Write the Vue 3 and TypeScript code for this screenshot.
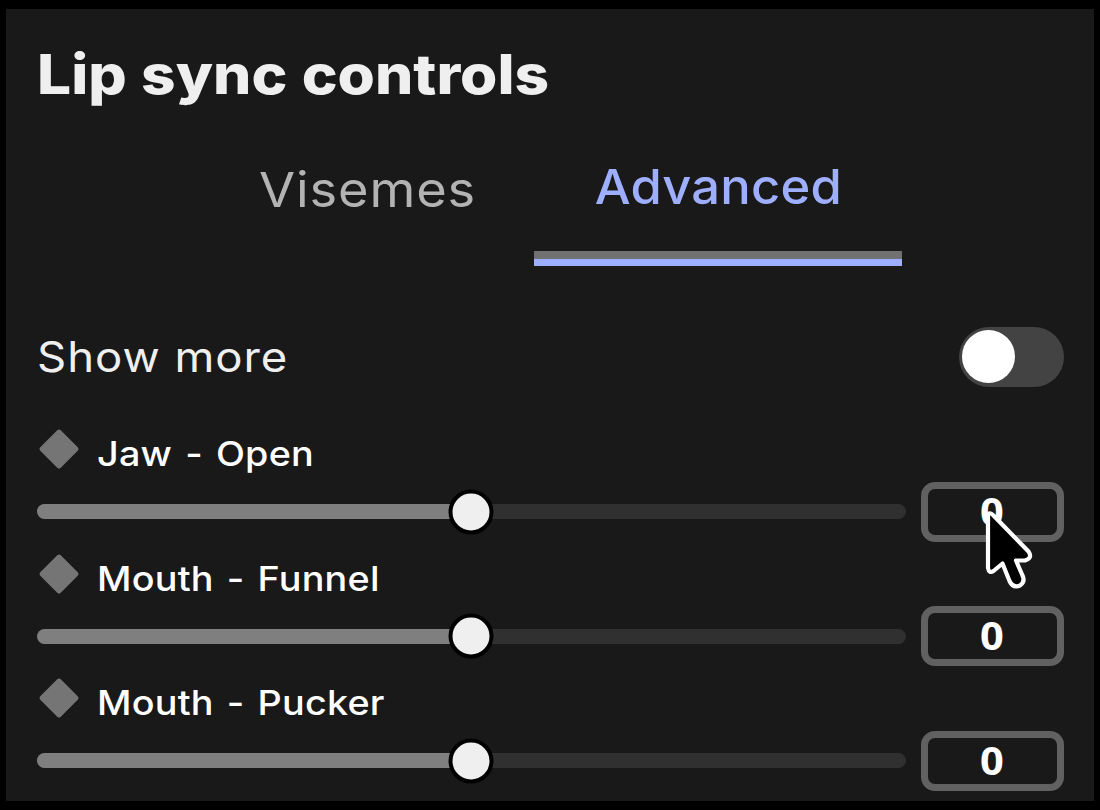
<script setup lang="ts">
import { ref } from 'vue'

interface Control {
  label: string
  value: number
}

const tabs = ['Visemes', 'Advanced']
const activeTab = ref('Advanced')
const showMore = ref(false)
const controls = ref<Control[]>([
  { label: 'Jaw - Open', value: 0 },
  { label: 'Mouth - Funnel', value: 0 },
  { label: 'Mouth - Pucker', value: 0 },
])

// Values run from -1 to 1, so zero sits in the middle of the track.
const fill = (value: number): string => `${(value + 1) * 50}%`
</script>

<template>
  <main class="screen">
    <section class="panel">
      <h1 class="title">Lip sync controls</h1>

      <nav class="tabs">
        <button
          v-for="tab in tabs"
          :key="tab"
          class="tab"
          :class="{ active: tab === activeTab }"
          @click="activeTab = tab"
        >
          <span class="tab-text">{{ tab }}</span>
        </button>
      </nav>

      <div class="more">
        <span class="more-label">Show more</span>
        <button class="toggle" :class="{ on: showMore }" aria-label="Show more" @click="showMore = !showMore">
          <span class="knob"></span>
        </button>
      </div>

      <div v-for="c in controls" :key="c.label" class="control">
        <div class="head">
          <svg class="diamond" viewBox="0 0 42 42">
            <rect x="6.5" y="6.5" width="29" height="29" rx="2.5" transform="rotate(45 21 21)" />
          </svg>
          <span class="label">{{ c.label }}</span>
        </div>
        <div class="row">
          <div class="track">
            <div class="fill" :style="{ width: fill(c.value) }"></div>
            <div class="thumb" :style="{ left: fill(c.value) }"></div>
          </div>
          <div class="box"><span class="digit">{{ c.value }}</span></div>
        </div>
      </div>
    </section>

    <svg class="cursor" viewBox="983 507 52 84">
      <path
        d="M988 515 L988 568 Q989 574 993.5 571 L1002.5 563.5 L1009.5 581 Q1013 588.5 1020 585.5 Q1025.500 582 1022.5 575.5 L1016 560.5 L1025 560.5 Q1033 558 1028.5 551.5 L993 515 Q989 511.500 988 515 Z"
      />
    </svg>
  </main>
</template>

<style>
html,
body {
  background: #000;
  overflow: hidden;
}
</style>

<style scoped>
.screen {
  position: relative;
  box-sizing: border-box;
  width: 1100px;
  height: 810px;
  padding: 9px 6px;
  background: #000;
  font-family: Inter, 'Open Sans', sans-serif;
  overflow: hidden;
}
.panel {
  box-sizing: border-box;
  height: 792px;
  padding: 29px 30px 0 31px;
  background: #191919;
}
button {
  padding: 0;
  border: 0;
  background: none;
  font: inherit;
}
.title {
  height: 72px;
  margin: 0;
  color: #efefef;
  font-size: 55px;
  font-weight: 800;
  line-height: 72px;
  word-spacing: 1px;
  white-space: nowrap;
  transform: scaleX(1.098);
  transform-origin: left;
}
.tabs {
  display: flex;
  height: 156px;
  margin-left: 145.5px;
}
.tab {
  box-sizing: border-box;
  width: 368px;
  height: 156px;
  padding-top: 50px;
  color: #b3b3b3;
  font-size: 48.5px;
  font-weight: 370;
  line-height: 60px;
  letter-spacing: 0.8px;
  white-space: nowrap;
  display: flex;
  justify-content: center;
}
.tab:not(.active) {
  width: 351.5px;
}
.tab-text {
  height: 60px;
  transform: translateX(9px) scaleX(1.08);
}
.tab.active {
  padding-top: 47px;
  border-bottom: 7px solid #9fafff;
  box-shadow: inset 0 -8px #717171;
  color: #9fafff;
  font-weight: 500;
  letter-spacing: 0.2px;
}
.tab.active .tab-text {
  transform: scaleX(1.045);
}
.more {
  display: flex;
  align-items: center;
  justify-content: space-between;
  height: 60px;
  margin-top: 61px;
}
.more-label {
  height: 60px;
  color: #efefef;
  font-size: 42px;
  font-weight: 370;
  line-height: 59px;
  letter-spacing: 0.9px;
  transform: scaleX(1.083);
  transform-origin: left;
}
.toggle {
  display: flex;
  align-items: center;
  width: 105px;
  height: 60px;
  padding: 0 3px 1px;
  box-sizing: border-box;
  border-radius: 30px;
  background: #434343;
}
.toggle.on {
  justify-content: flex-end;
}
.knob {
  width: 53px;
  height: 53px;
  border-radius: 50%;
  background: #fff;
}
.control {
  height: 124.7px;
}
.more + .control {
  margin-top: 41px;
}
.head {
  display: flex;
  height: 53.5px;
  gap: 17px;
  padding-left: 1px;
}
.diamond {
  width: 42px;
  height: 42px;
  fill: #757575;
}
.label {
  color: #fff;
  font-size: 34.5px;
  font-weight: 490;
  line-height: 51px;
  letter-spacing: 0.2px;
  word-spacing: 2.5px;
  white-space: nowrap;
  transform: scaleX(1.095);
  transform-origin: left;
}
.row {
  display: flex;
  align-items: center;
  gap: 15px;
  height: 60px;
}
.track {
  position: relative;
  flex: 1;
  height: 15px;
  border-radius: 8px;
  background: #303030;
}
.fill {
  height: 100%;
  border-radius: 8px 0 0 8px;
  background: #7f7f7f;
}
.thumb {
  position: absolute;
  top: 50%;
  box-sizing: border-box;
  width: 45px;
  height: 45px;
  border: 4px solid #000;
  border-radius: 50%;
  background: #efefef;
  transform: translate(-50%, -50%);
}
.box {
  box-sizing: border-box;
  width: 143.5px;
  height: 60px;
  border: 7.5px solid #616161;
  border-radius: 14px;
  color: #fff;
  font-family: 'Open Sans', 'Noto Sans', sans-serif;
  font-size: 38.5px;
  font-weight: 680;
  line-height: 45px;
  text-align: center;
}
.digit {
  display: inline-block;
  transform: scaleX(1.08);
}
.cursor {
  position: absolute;
  left: 983px;
  top: 507px;
  width: 52px;
  height: 84px;
  fill: #000;
  stroke: #fff;
  stroke-width: 4.2;
  stroke-linejoin: round;
}
</style>
